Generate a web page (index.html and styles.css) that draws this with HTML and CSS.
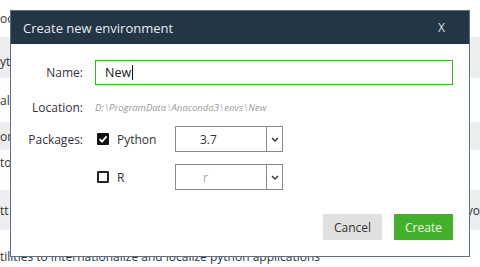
FILE: index.html
```html
<!DOCTYPE html>
<html>
  <head>
    <link rel="stylesheet" href="styles.css">
  </head>
  <body>
    <div class="table">
      <div class="row r1"><span>oo</span></div>
      <div class="row r2 shade"><span>yt</span></div>
      <div class="row r3"><span>al</span></div>
      <div class="row r4 shade"><span>or</span></div>
      <div class="row r5"><span>to</span></div>
      <div class="row r6 shade"><span>tt</span><span class="right">yo</span></div>
      <div class="row r7"><span>tilities to internationalize and localize python applications</span></div>
    </div>

    <div class="dialog">
      <div class="dialog-header">
        <span class="title">Create new environment</span>
        <span class="close">X</span>
      </div>
      <div class="dialog-body">
        <div class="field name-row">
          <label class="label">Name:</label>
          <div class="input">New<span class="caret"></span></div>
        </div>
        <div class="field location-row">
          <label class="label">Location:</label>
          <div class="path">D:<i>\</i>ProgramData<i>\</i>Anaconda3<i>\</i>envs<i>\</i>New</div>
        </div>
        <div class="field pkg-row">
          <label class="label">Packages:</label>
          <div class="pkg">
            <span class="check checked">
              <svg viewBox="0 0 12 12" width="12" height="12"><path d="M2.5 6.2 L5 8.6 L9.6 3.4" fill="none" stroke="#fff" stroke-width="1.8"/></svg>
            </span>
            <span class="pkg-name">Python</span>
          </div>
          <div class="select">
            <span class="value">3.7</span>
            <span class="arrow"><svg viewBox="0 0 8 5" width="8" height="5"><path d="M1 1 L4 4 L7 1" fill="none" stroke="#333" stroke-width="1.4"/></svg></span>
          </div>
        </div>
        <div class="field r-row">
          <span class="label"></span>
          <div class="pkg">
            <span class="check"></span>
            <span class="pkg-name">R</span>
          </div>
          <div class="select">
            <span class="value muted">r</span>
            <span class="arrow"><svg viewBox="0 0 8 5" width="8" height="5"><path d="M1 1 L4 4 L7 1" fill="none" stroke="#333" stroke-width="1.4"/></svg></span>
          </div>
        </div>
        <div class="actions">
          <button class="btn cancel">Cancel</button>
          <button class="btn create">Create</button>
        </div>
      </div>
    </div>
  </body>
</html>
```

FILE: styles.css
```css
body {
  margin: 0;
  width: 480px;
  height: 267px;
  overflow: hidden;
  font-family: "Open Sans", "Noto Sans", sans-serif;
  font-size: 12px;
  color: #333;
  background: #fff;
}
.table {
  display: flex;
  flex-direction: column;
}
.row {
  display: flex;
  justify-content: space-between;
  align-items: center;
  box-sizing: border-box;
  white-space: nowrap;
}
.shade {
  background: #eeeeee;
}
.r1 { height: 37px; }
.r2 { height: 41px; align-items: flex-end; padding-bottom: 8px; }
.r3 { height: 44px; }
.r4 { height: 28px; }
.r5 { height: 40px; align-items: flex-start; padding-top: 4px; }
.r6 { height: 40px; }
.r7 { height: 37px; align-items: flex-start; padding-top: 18px; }

.dialog {
  position: absolute;
  left: 10px;
  top: 10px;
  width: 458px;
  height: 245px;
  background: #fff;
  border: 1px solid #55738a;
}
.dialog-header {
  height: 33px;
  background: #243546;
  display: flex;
  align-items: center;
  justify-content: space-between;
  padding: 0 24px 0 12px;
  color: #e6ebef;
  font-size: 13px;
}
.close {
  font-size: 12px;
  color: #d8e2ea;
}
.dialog-body {
  display: flex;
  flex-direction: column;
  padding: 16px 16px 0 0;
}
.field {
  display: flex;
  align-items: center;
}
.label {
  width: 72px;
  margin-right: 12px;
  text-align: right;
  color: #3a3040;
  font-size: 12px;
}
.name-row {
  height: 25px;
}
.input {
  flex: 1;
  height: 25px;
  box-sizing: border-box;
  border: 1px solid #3cae2c;
  padding-left: 9px;
  display: flex;
  align-items: center;
  color: #222;
  font-size: 12.5px;
}
.caret {
  display: inline-block;
  width: 1px;
  height: 15px;
  background: #111;
  margin-left: 1px;
}
.location-row {
  height: 24px;
  margin-top: 10px;
}
.path {
  font-style: italic;
  font-size: 9.5px;
  color: #9a9a9a;
}
.path i {
  color: #9fb3c8;
  padding: 0 1px;
}
.pkg-row {
  height: 26px;
  margin-top: 7px;
}
.r-row {
  height: 26px;
  margin-top: 12px;
}
.pkg {
  width: 80px;
  display: flex;
  align-items: center;
}
.check {
  width: 12px;
  height: 12px;
  box-sizing: border-box;
  border: 2px solid #222;
  border-radius: 1px;
  margin-left: 2px;
  margin-right: 8px;
  display: flex;
  align-items: center;
  justify-content: center;
}
.check.checked {
  background: #111;
  border: none;
}
.pkg-name {
  color: #333;
  font-size: 12px;
}
.select {
  width: 108px;
  height: 26px;
  box-sizing: border-box;
  border: 1px solid #8a8a8a;
  display: flex;
}
.select .value {
  flex: 1;
  display: flex;
  align-items: center;
  padding-left: 24px;
  font-size: 12px;
  color: #333;
}
.select .value.muted {
  color: #9aa8b4;
  padding-left: 27px;
}
.arrow {
  width: 15px;
  border-left: 1px solid #8a8a8a;
  display: flex;
  align-items: center;
  justify-content: center;
}
.actions {
  display: flex;
  justify-content: flex-end;
  gap: 12px;
  margin-top: 24px;
}
.btn {
  width: 59px;
  height: 26px;
  border: none;
  font-family: inherit;
  font-size: 12px;
  padding: 0;
  cursor: pointer;
}
.cancel {
  background: #e0e0e0;
  color: #333;
}
.create {
  background: #43b02a;
  color: #f2f7ee;
}
```
